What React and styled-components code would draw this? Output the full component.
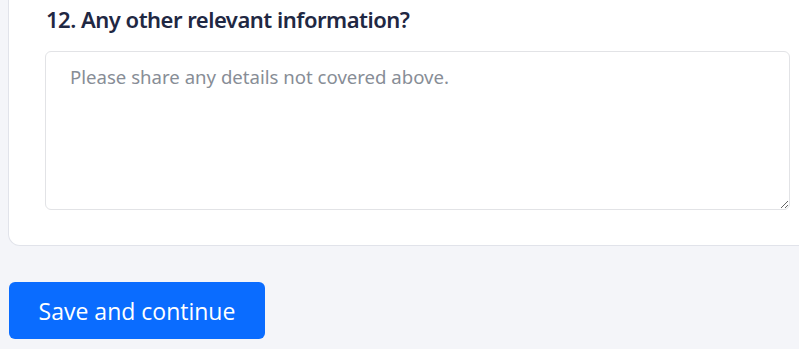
import React from "react";
import styled, { createGlobalStyle } from "styled-components";

const GlobalStyle = createGlobalStyle`
  html, body {
    margin: 0;
    padding: 0;
    background: #f4f5f9;
    overflow: hidden;
  }
`;

const Page = styled.div`
  width: 799px;
  height: 349px;
  padding-left: 8px;
  display: flex;
  flex-direction: column;
  align-items: flex-start;
  box-sizing: border-box;
`;

const Card = styled.section`
  width: 830px;
  flex-shrink: 0;
  box-sizing: border-box;
  background: #fff;
  border: 1px solid #e1e3ea;
  border-top: none;
  border-radius: 0 0 12px 12px;
  padding: 4px 0 35px 36px;
  display: flex;
  flex-direction: column;
  gap: 17px;
`;

const Question = styled.h3`
  margin: 0 0 0 1px;
  font-family: "Noto Sans", "Open Sans", sans-serif;
  font-size: 22px;
  font-weight: 600;
  line-height: 30px;
  color: #1f2843;
  letter-spacing: -0.5px;
`;

const TextArea = styled.textarea`
  width: 745px;
  height: 159px;
  box-sizing: border-box;
  border: 1px solid #e2e3e6;
  border-radius: 6px;
  padding: 12px 24px;
  font-family: "Noto Sans", "Open Sans", sans-serif;
  font-size: 18.6px;
  line-height: 26px;
  color: #1f2843;
  resize: vertical;
  outline: none;

  &::placeholder {
    color: #878d96;
  }
`;

const SaveButton = styled.button`
  margin-top: 36px;
  width: 256px;
  height: 57px;
  margin-left: 1px;
  border: none;
  border-radius: 6px;
  background: #0a6cff;
  color: #fff;
  font-family: "Open Sans", sans-serif;
  font-size: 23px;
  font-weight: 400;
  cursor: pointer;
`;

export default function App() {
  return (
    <>
      <GlobalStyle />
      <Page>
        <Card>
          <Question>12. Any other relevant information?</Question>
          <TextArea placeholder="Please share any details not covered above." />
        </Card>
        <SaveButton>Save and continue</SaveButton>
      </Page>
    </>
  );
}
